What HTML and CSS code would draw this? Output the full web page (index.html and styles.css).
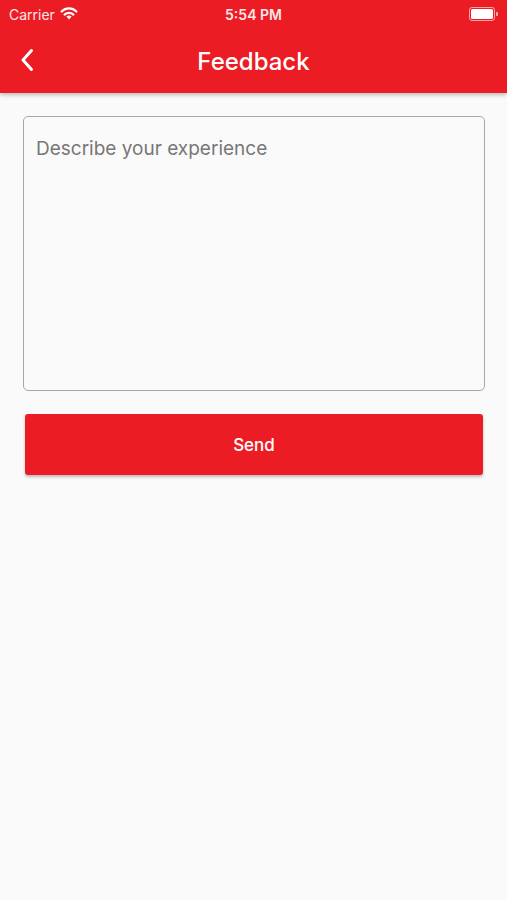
FILE: index.html
```html
<!doctype html>
<html>
<head>
<meta charset="utf-8">
<title>Feedback</title>
<link rel="stylesheet" href="styles.css">
</head>
<body>
<div class="top">
    <div class="status">
        <div class="carrier">Carrier
            <svg class="wifi" width="18" height="13" viewBox="0 0 18 13">
                <path d="M9 12.5l2.6-2.9a3.8 3.8 0 0 0-5.2 0z" fill="#fff"/>
                <path d="M4.6 7.6a6.3 6.3 0 0 1 8.8 0" stroke="#fff" stroke-width="2.2" fill="none" stroke-linecap="round"/>
                <path d="M1.6 4.5a10.5 10.5 0 0 1 14.8 0" stroke="#fff" stroke-width="2.2" fill="none" stroke-linecap="round"/>
            </svg>
        </div>
        <div class="time">5:54 PM</div>
        <div class="battery">
            <span class="cell"><span class="level"></span></span>
            <span class="tip"></span>
        </div>
    </div>
    <div class="bar">
        <a class="back" href="javascript:;">
            <svg width="14" height="24" viewBox="0 0 14 24">
                <path d="M11.5 2.5L3 12l8.5 9.5" stroke="#fff" stroke-width="3" fill="none" stroke-linecap="round" stroke-linejoin="round"/>
            </svg>
        </a>
        <h1>Feedback</h1>
    </div>
</div>
<div class="content">
    <textarea class="box" placeholder="Describe your experience"></textarea>
    <a class="send" href="javascript:;">Send</a>
</div>
</body>
</html>
```
FILE: styles.css
```css
html, body{
    margin:0;
    padding:0;
}
body{
    background:#fafafa;
    font-family:Inter, "Liberation Sans", sans-serif;
    height:900px;
}
a{
    text-decoration:none;
}
.top{
    background:#ec1c24;
    box-shadow:0 2px 4px rgba(0,0,0,0.25);
    color:#fff;
}
.status{
    height:28px;
    display:flex;
    align-items:center;
    justify-content:space-between;
    padding:0 9px;
    font-size:14px;
}
.carrier{
    width:110px;
    display:flex;
    align-items:center;
    gap:5px;
    color:#fde8e8;
}
.wifi{
    margin-top:-2px;
}
.time{
    font-weight:600;
    color:#fde8e8;
}
.battery{
    width:110px;
    display:flex;
    justify-content:flex-end;
    align-items:center;
}
.cell{
    width:22px;
    height:10px;
    border:1px solid rgba(255,255,255,0.6);
    border-radius:3px;
    padding:1px;
    display:flex;
}
.level{
    flex:1;
    background:#fff;
    border-radius:1.5px;
}
.tip{
    width:2px;
    height:4px;
    background:rgba(255,255,255,0.6);
    border-radius:0 1px 1px 0;
    margin-left:1px;
}
.bar{
    height:65px;
    display:flex;
    align-items:center;
    justify-content:center;
    position:relative;
}
.back{
    position:absolute;
    left:20px;
    top:20px;
    display:flex;
}
.bar h1{
    margin:2px 0 0;
    font-size:24px;
    font-weight:500;
    color:#fff;
}
.content{
    padding:23px 22px 0 23px;
    display:flex;
    flex-direction:column;
}
.box{
    height:275px;
    box-sizing:border-box;
    border:1.5px solid #a8a8a8;
    border-radius:5px;
    background:#fafafa;
    padding:20px 12px;
    font-family:Inter, "Liberation Sans", sans-serif;
    font-size:19px;
    resize:none;
    outline:none;
    margin:0;
}
.box::placeholder{
    color:#777;
}
.send{
    margin:23px 2px 0;
    height:61px;
    background:#ec1c24;
    border-radius:3px;
    box-shadow:0 2px 3px rgba(0,0,0,0.25);
    color:#fff;
    font-size:17px;
    font-weight:500;
    display:flex;
    align-items:center;
    justify-content:center;
}
```
